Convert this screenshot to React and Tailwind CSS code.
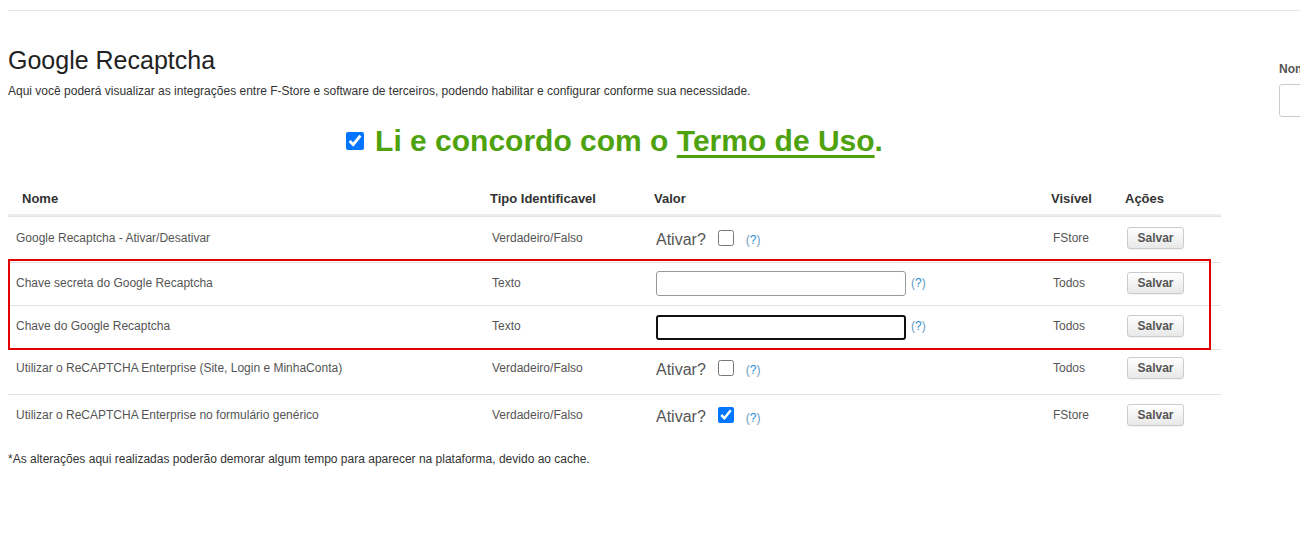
import { useState } from 'react';

const rows = [
  { nome: 'Google Recaptcha - Ativar/Desativar', tipo: 'Verdadeiro/Falso', kind: 'check', checked: false, visivel: 'FStore', h: 'h-[46px] pb-[4px]' },
  { nome: 'Chave secreta do Google Recaptcha', tipo: 'Texto', kind: 'text', visivel: 'Todos', h: 'h-[43px] pb-[3px]' },
  { nome: 'Chave do Google Recaptcha', tipo: 'Texto', kind: 'text', focused: true, visivel: 'Todos', h: 'h-[44px] pb-[3px]' },
  { nome: 'Utilizar o ReCAPTCHA Enterprise (Site, Login e MinhaConta)', tipo: 'Verdadeiro/Falso', kind: 'check', checked: false, visivel: 'Todos', h: 'h-[45px] pb-[9px]' },
  { nome: 'Utilizar o ReCAPTCHA Enterprise no formulário genérico', tipo: 'Verdadeiro/Falso', kind: 'check', checked: true, visivel: 'FStore', h: 'h-[44px] pb-[3px]' },
];

const cols = 'grid grid-cols-[476px_164px_397px_74px_102px]';

function Help({ className = '' }) {
  return (
    <span className={`text-[12px] text-[#2a8fd4] ${className}`}>
      <span className="text-[#6a9cc4]">(</span>?<span className="text-[#6a9cc4]">)</span>
    </span>
  );
}

function Row({ row }) {
  const [checked, setChecked] = useState(row.checked);
  return (
    <div className={`${cols} ${row.h} items-center border-t border-[#e3e3e3] text-[12px] text-[#555]`}>
      <div className="pl-2">{row.nome}</div>
      <div className="pl-2">{row.tipo}</div>
      <div className="pl-2 flex items-center">
        {row.kind === 'check' ? (
          <>
            <span className="text-[16px] text-[#555] mt-[4px]">Ativar?</span>
            <input
              type="checkbox"
              checked={checked}
              onChange={() => setChecked(!checked)}
              className="w-[16px] h-[16px] ml-[12px] accent-[#0075ff]"
            />
            <Help className="ml-[12px] mt-[5px]" />
          </>
        ) : (
          <>
            <input
              type="text"
              className={`w-[250px] h-[25px] rounded-[3px] bg-white outline-none mt-[2px] ${
                row.focused ? 'border-2 border-[#111]' : 'border border-[#999]'
              }`}
            />
            <Help className="ml-[5px]" />
          </>
        )}
      </div>
      <div className="pl-2">{row.visivel}</div>
      <div className="pl-2">
        <button className="w-[57px] h-[22px] rounded-[3px] border border-[#ccc] bg-gradient-to-b from-white to-[#e8e8e8] text-[12px] font-bold text-[#555] shadow-[0_1px_1px_rgba(0,0,0,0.05)]">
          Salvar
        </button>
      </div>
    </div>
  );
}

export default function App() {
  const [agree, setAgree] = useState(true);

  return (
    <div className="min-h-screen bg-white font-['Liberation_Sans',Arial,sans-serif] text-[#333] overflow-hidden">
      <div className="ml-2 mt-[10px] border-t border-[#e5e5e5]" />

      <div className="flex">
        <div className="ml-2 w-[1213px] shrink-0">
          <h1 className="mt-[35px] text-[25px] leading-[28px] text-[#222]">Google Recaptcha</h1>
          <p className="mt-[9px] text-[12px] leading-[17px] text-[#333]">
            Aqui você poderá visualizar as integrações entre F-Store e software de terceiros, podendo habilitar e configurar conforme sua necessidade.
          </p>

          <div className="mt-[23px] flex items-center justify-center h-[34px]">
            <input
              type="checkbox"
              checked={agree}
              onChange={() => setAgree(!agree)}
              className="w-[18px] h-[18px] accent-[#0075ff] mt-[2px]"
            />
            <span className="ml-[11px] text-[30px] font-bold text-[#4ea20e]">
              Li e concordo com o{' '}
              <a href="#" className="underline decoration-[3px] underline-offset-[4px]">Termo de Uso</a>.
            </span>
          </div>

          <div className="mt-[22px]">
            <div className={`${cols} h-[37px] pt-[4px] items-center border-b-2 border-[#ececec] text-[13px] font-bold text-[#333]`}>
              <div className="pl-[14px]">Nome</div>
              <div className="pl-[6px]">Tipo Identificavel</div>
              <div className="pl-[6px]">Valor</div>
              <div className="pl-[6px]">Visível</div>
              <div className="pl-[6px]">Ações</div>
            </div>

            <Row row={rows[0]} />
            <div className="relative">
              <Row row={rows[1]} />
              <Row row={rows[2]} />
              <div className="absolute left-0 right-[10px] -top-[3px] -bottom-[1px] border-2 border-[#e00000] pointer-events-none" />
            </div>
            <Row row={rows[3]} />
            <Row row={rows[4]} />
          </div>

          <p className="mt-[13px] text-[12px] leading-[17px] text-[#333]">
            *As alterações aqui realizadas poderão demorar algum tempo para aparecer na plataforma, devido ao cache.
          </p>
        </div>

        <div className="ml-[58px] flex-1 min-w-0 pt-[49px]">
          <div className="text-[12px] font-bold text-[#555] whitespace-nowrap">Nome</div>
          <div className="mt-[6px] h-[33px] w-[200px] border border-[#ccc] rounded-l-[3px]" />
        </div>
      </div>
    </div>
  );
}
